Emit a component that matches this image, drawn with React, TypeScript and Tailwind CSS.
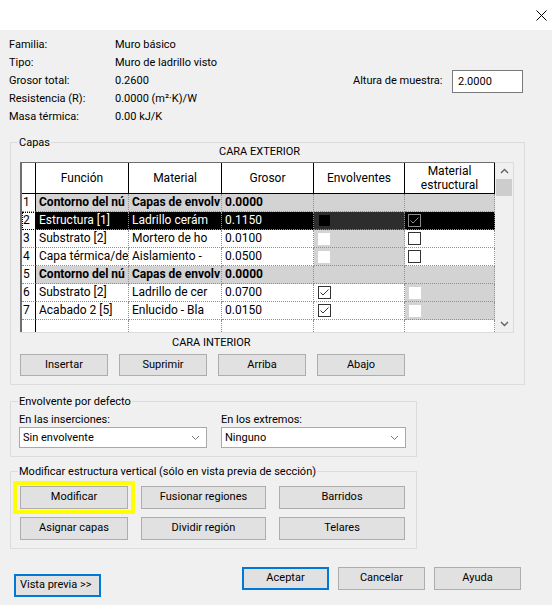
import React from "react";

type Kind = "core" | "sel" | "inner" | "outer";
type Row = { n: string; f: string; m: string; g: string; kind: Kind };

const rows: Row[] = [
  { n: "1", f: "Contorno del nú", m: "Capas de envolv", g: "0.0000", kind: "core" },
  { n: "2", f: "Estructura [1]", m: "Ladrillo cerám", g: "0.1150", kind: "sel" },
  { n: "3", f: "Substrato [2]", m: "Mortero de ho", g: "0.0100", kind: "inner" },
  { n: "4", f: "Capa térmica/de", m: "Aislamiento -", g: "0.0500", kind: "inner" },
  { n: "5", f: "Contorno del nú", m: "Capas de envolv", g: "0.0000", kind: "core" },
  { n: "6", f: "Substrato [2]", m: "Ladrillo de cer", g: "0.0700", kind: "outer" },
  { n: "7", f: "Acabado 2 [5]", m: "Enlucido - Bla", g: "0.0150", kind: "outer" },
];

function Check({ checked, dark }: { checked?: boolean; dark?: boolean }) {
  return (
    <span
      className={
        dark
          ? "w-[13px] h-[13px] border border-[#8c8c8c] bg-black flex items-center justify-center shrink-0"
          : "w-[13px] h-[13px] border border-[#333333] bg-white flex items-center justify-center shrink-0"
      }
    >
      {checked && (
        <svg width="11" height="11" viewBox="0 0 11 11">
          <path d="M1.5 5.5L4 8L9.5 2.5" fill="none" stroke={dark ? "#8c8c8c" : "#333333"} strokeWidth="1" />
        </svg>
      )}
    </span>
  );
}

function Chevron({ up }: { up?: boolean }) {
  return (
    <svg width="9" height="6" viewBox="0 0 9 6">
      <path d={up ? "M1 5L4.5 1.5L8 5" : "M1 1L4.5 4.5L8 1"} fill="none" stroke="#606060" strokeWidth="1.4" />
    </svg>
  );
}

function Select({ value, w }: { value: string; w: string }) {
  return (
    <div className={`${w} h-[21px] bg-white border border-[#a9a9a9] flex items-center justify-between pl-[3px] pr-[6px]`}>
      <span className="leading-[19px]">{value}</span>
      <svg width="9" height="6" viewBox="0 0 9 6">
        <path d="M1 1L4.5 4.5L8 1" fill="none" stroke="#7a7a7a" strokeWidth="1" />
      </svg>
    </div>
  );
}

const btn = "h-[23px] bg-[#e1e1e1] border border-[#adadad] flex items-center justify-center shrink-0";

const hCell = "h-full border-r border-b border-black flex items-center justify-center text-center";
const bCell =
  "h-full border-r border-b border-dotted border-[#8f8f8f] overflow-hidden whitespace-nowrap pl-[3px] leading-[17px]";
const numCell =
  "w-[14px] h-full border-r border-b border-r-black border-b-[#8f8f8f] [border-bottom-style:dotted] bg-white pl-[1px] leading-[17px] overflow-hidden";

function TableRow({ r }: { r: Row }) {
  const core = r.kind === "core";
  const sel = r.kind === "sel";
  const textBg = core ? "bg-[#d3d3d3] font-bold" : sel ? "bg-black text-white" : "bg-white";
  return (
    <div className="flex h-[18px]">
      <div className={sel ? `${numCell} outline-1 outline-dotted outline-black -outline-offset-1` : numCell}>{r.n}</div>
      <div className={`w-[93px] ${bCell} ${textBg}`}>{r.f}</div>
      <div className={`w-[93px] ${bCell} ${textBg}`}>{r.m}</div>
      <div className={`w-[92px] ${bCell} ${textBg}`}>{r.g}</div>
      <div
        className={`w-[91px] ${bCell} pl-[4px] flex items-center ${
          core ? "bg-[#d3d3d3]" : sel ? "bg-[#2d2d2d]" : r.kind === "inner" ? "bg-[#d3d3d3]" : "bg-white"
        }`}
      >
        {sel && <span className="w-[11px] h-[11px] bg-black ml-[1px]" />}
        {r.kind === "inner" && <span className="w-[12px] h-[12px] bg-white" />}
        {r.kind === "outer" && <Check checked />}
      </div>
      <div
        className={`w-[90px] ${bCell} pl-[3px] flex items-center ${
          core ? "bg-[#d3d3d3]" : sel ? "bg-black" : r.kind === "outer" ? "bg-[#d3d3d3]" : "bg-white"
        }`}
      >
        {sel && <Check checked dark />}
        {r.kind === "inner" && <Check />}
        {r.kind === "outer" && <span className="w-[12px] h-[12px] bg-white ml-[1px]" />}
      </div>
    </div>
  );
}

function Group({ label, className, children }: { label: string; className: string; children: React.ReactNode }) {
  return (
    <div className={`relative border border-[#dcdcdc] ${className}`}>
      <span className="absolute left-[7px] -top-[8px] px-[1px] bg-[#f0f0f0] leading-[15px] whitespace-nowrap">{label}</span>
      {children}
    </div>
  );
}

export default function App() {
  return (
    <div className="w-[552px] h-[605px] bg-[#f0f0f0] font-['Roboto',sans-serif] text-[11px] text-black overflow-hidden">
      {/* title bar */}
      <div className="h-[30px] bg-white flex items-center justify-end pr-[5px]">
        <svg width="11" height="11" viewBox="0 0 11 11">
          <path d="M0.5 0.5L10.5 10.5M10.5 0.5L0.5 10.5" stroke="#000" strokeWidth="1" />
        </svg>
      </div>

      {/* info */}
      <div className="pt-[6px] pl-[9px]">
        <div className="flex items-center h-[18px]">
          <span className="w-[106px] shrink-0">Familia:</span>
          <span>Muro básico</span>
        </div>
        <div className="flex items-center h-[18px]">
          <span className="w-[106px] shrink-0">Tipo:</span>
          <span>Muro de ladrillo visto</span>
        </div>
        <div className="flex items-center h-[18px]">
          <span className="w-[106px] shrink-0">Grosor total:</span>
          <span>0.2600</span>
          <span className="ml-auto w-[99px] shrink-0 whitespace-nowrap">Altura de muestra:</span>
          <span className="w-[71px] h-[23px] bg-white border border-[#7a7a7a] pl-[5px] leading-[21px] mr-[29px] shrink-0">
            2.0000
          </span>
        </div>
        <div className="flex items-center h-[18px]">
          <span className="w-[106px] shrink-0">Resistencia (R):</span>
          <span>0.0000 (m²·K)/W</span>
        </div>
        <div className="flex items-center h-[18px]">
          <span className="w-[106px] shrink-0">Masa térmica:</span>
          <span>0.00 kJ/K</span>
        </div>
      </div>

      {/* Capas */}
      <Group label="Capas" className="mt-[16px] ml-[10px] w-[515px] h-[243px]">
        <div className="h-[19px] leading-[17px] pl-[208px] whitespace-nowrap">CARA EXTERIOR</div>
        <div className="ml-[9px] flex w-[494px] h-[171px] border-t border-r border-b border-[#dcdcdc] text-[12px]">
          <div className="-mt-px w-[475px] h-[170px] border-l-2 border-t border-[#6e6e6e] bg-white flex flex-col">
            <div className="flex h-[31px] shrink-0">
              <div className={`w-[14px] ${hCell}`} />
              <div className={`w-[93px] ${hCell}`}>Función</div>
              <div className={`w-[93px] ${hCell}`}>Material</div>
              <div className={`w-[92px] ${hCell}`}>Grosor</div>
              <div className={`w-[91px] ${hCell}`}>Envolventes</div>
              <div className={`w-[90px] ${hCell} leading-[14px]`}>
                Material
                <br />
                estructural
              </div>
            </div>
            {rows.map((r) => (
              <TableRow key={r.n} r={r} />
            ))}
            <div className="flex flex-1">
              <div className="w-[14px] h-full border-r border-black" />
              <div className="w-[93px] h-full border-r border-dotted border-[#8f8f8f]" />
              <div className="w-[93px] h-full border-r border-dotted border-[#8f8f8f]" />
              <div className="w-[92px] h-full border-r border-dotted border-[#8f8f8f]" />
              <div className="w-[91px] h-full border-r border-dotted border-[#8f8f8f]" />
              <div className="w-[90px] h-full border-r border-dotted border-[#8f8f8f]" />
            </div>
          </div>
          <div className="w-[18px] flex flex-col bg-[#f0f0f0]">
            <div className="h-[16px] flex items-center justify-center">
              <Chevron up />
            </div>
            <div className="h-[17px] mx-[1px] bg-[#cdcdcd]" />
            <div className="flex-1" />
            <div className="h-[17px] flex items-center justify-center">
              <Chevron />
            </div>
          </div>
        </div>
        <div className="h-[20px] leading-[20px] pl-[161px] whitespace-nowrap">CARA INTERIOR</div>
        <div className="mt-[1px] ml-[9px] flex gap-[11px]">
          <div className={`${btn} !h-[22px] w-[88px]`}>Insertar</div>
          <div className={`${btn} !h-[22px] w-[88px]`}>Suprimir</div>
          <div className={`${btn} !h-[22px] w-[88px]`}>Arriba</div>
          <div className={`${btn} !h-[22px] w-[88px]`}>Abajo</div>
        </div>
      </Group>

      {/* Envolvente por defecto */}
      <Group label="Envolvente por defecto" className="mt-[16px] ml-[10px] w-[407px] h-[56px]">
        <div className="flex gap-[14px] pl-[8px] pt-[10px]">
          <div className="flex flex-col">
            <span className="h-[15px] leading-[15px]">En las inserciones:</span>
            <Select value="Sin envolvente" w="w-[188px]" />
          </div>
          <div className="flex flex-col">
            <span className="h-[15px] leading-[15px]">En los extremos:</span>
            <Select value="Ninguno" w="w-[185px]" />
          </div>
        </div>
      </Group>

      {/* Modificar estructura vertical */}
      <Group
        label="Modificar estructura vertical (sólo en vista previa de sección)"
        className="mt-[14px] ml-[10px] w-[407px] h-[78px]"
      >
        <div className="pt-[14px] pl-[9px] flex flex-col gap-[8px]">
          <div className="flex">
            <div className="relative">
              <span className="absolute -inset-x-[7px] -inset-y-[5px] border-[4px] border-[#ffff00]" />
              <div className={`${btn} w-[108px]`}>Modificar</div>
            </div>
            <div className={`${btn} w-[125px] ml-[13px]`}>Fusionar regiones</div>
            <div className={`${btn} w-[126px] ml-[13px]`}>Barridos</div>
          </div>
          <div className="flex">
            <div className={`${btn} w-[108px]`}>Asignar capas</div>
            <div className={`${btn} w-[125px] ml-[13px]`}>Dividir región</div>
            <div className={`${btn} w-[126px] ml-[13px]`}>Telares</div>
          </div>
        </div>
      </Group>

      {/* bottom buttons */}
      <div className="mt-[18px] flex items-start">
        <div className="ml-[14px] mt-[7px] w-[87px] h-[23px] bg-[#e1e1e1] border-2 border-[#0078d7] flex items-center pl-[4px] whitespace-nowrap shrink-0">
          Vista previa &gt;&gt;
        </div>
        <div className="ml-[141px] w-[87px] h-[23px] bg-[#e1e1e1] border-2 border-[#0078d7] flex items-center justify-center shrink-0">
          Aceptar
        </div>
        <div className={`${btn} w-[87px] ml-[9px]`}>Cancelar</div>
        <div className={`${btn} w-[87px] ml-[9px]`}>Ayuda</div>
      </div>
    </div>
  );
}
